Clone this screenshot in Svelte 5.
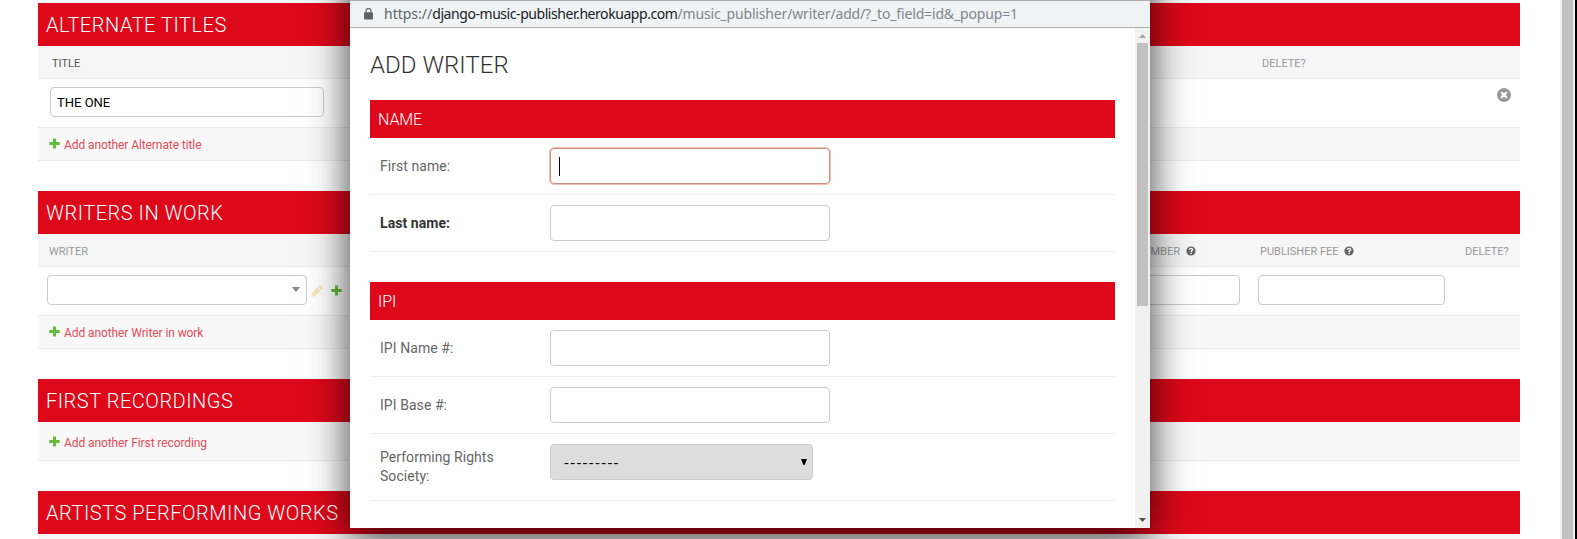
<script>
  const personal = [
    { label: 'First name:', focused: true },
    { label: 'Last name:', required: true }
  ];
  const ipi = [{ label: 'IPI Name #:' }, { label: 'IPI Base #:' }];
</script>

{#snippet plus()}
  <svg class="plus" width="11" height="11" viewBox="0 0 11 11"><path d="M4 0.4h3v3.6h3.7v3H7v3.6H4V7H.3V4H4z" fill="#67bb3c" /></svg>
{/snippet}

{#snippet help()}
  <svg class="help" width="10" height="10" viewBox="0 0 10 10">
    <circle cx="5" cy="5" r="4.6" fill="#666" />
    <path d="M3.4 3.8C3.5 1.9 6.7 1.9 6.6 3.7C6.5 4.7 5.1 4.6 5.1 5.9" fill="none" stroke="#fff" stroke-width="1.3" />
    <rect x="4.4" y="6.7" width="1.4" height="1.3" fill="#fff" />
  </svg>
{/snippet}

{#snippet field(f)}
  <div class="field">
    <label class:required={f.required} for={f.label}>{f.label}</label>
    <div id={f.label} class="box" class:focused={f.focused}>
      {#if f.focused}<span class="caret"></span>{/if}
    </div>
  </div>
{/snippet}

<div class="screen">
  <main>
    <div class="top"></div>
    <section>
      <h2>ALTERNATE TITLES</h2>
      <div class="head titles"><span class="dark">TITLE</span><span>DELETE?</span></div>
      <div class="row titles-row">
        <div class="input title-input"><span>THE ONE</span></div>
        <svg class="remove" width="14" height="14" viewBox="0 0 14 14">
          <circle cx="7" cy="7" r="7" fill="#999" />
          <path d="M4.2 4.2l5.6 5.6M9.8 4.2L4.2 9.8" stroke="#fff" stroke-width="2.3" />
        </svg>
      </div>
      <div class="add">{@render plus()}<span>Add another Alternate title</span></div>
    </section>

    <section>
      <h2>WRITERS IN WORK</h2>
      <div class="head writers">
        <span>WRITER</span>
        <span class="number">SAAN NUMBER {@render help()}</span>
        <span>PUBLISHER FEE {@render help()}</span>
        <span>DELETE?</span>
      </div>
      <div class="row writers-row">
        <div class="input combo"><svg width="8" height="5" viewBox="0 0 8 5"><path d="M0 0h8L4 5z" fill="#888" /></svg></div>
        <svg class="pencil" width="12" height="12" viewBox="0 0 12 12">
          <path d="M.3 11.7L.8 7.9 6.2 2.5 9.5 5.8 4.1 11.2zM6.9 1.8L8.3.5Q9.2-.2 10 .6L11.4 2Q12.2 2.8 11.5 3.7L10.2 5.1z" fill="#f7e4bf" />
          <path d="M1.8 9.1l1.1 1.1" stroke="#fff" />
        </svg>
        {@render plus()}
        <div class="input saan"></div>
        <div class="input fee"></div>
      </div>
      <div class="add">{@render plus()}<span>Add another Writer in work</span></div>
    </section>

    <section>
      <h2>FIRST RECORDINGS</h2>
      <div class="add tall">{@render plus()}<span>Add another First recording</span></div>
    </section>

    <section>
      <h2>ARTISTS PERFORMING WORKS</h2>
      <div class="head"></div>
    </section>
  </main>
  <div class="pagebar"><div></div></div>

  <div class="popup">
    <div class="address">
      <svg width="9" height="12" viewBox="0 0 9 12">
        <rect x="0" y="4.2" width="9" height="7.3" rx="1" fill="#5f6368" />
        <path d="M2 5V3a2.5 2.5 0 0 1 5 0v2" fill="none" stroke="#5f6368" stroke-width="1.2" />
      </svg>
      <span class="url"><span class="scheme">https://</span><span class="host">django-music-publisher.herokuapp.com</span><span class="path">/music_publisher/writer/add/?_to_field=id&amp;_popup=1</span></span>
    </div>
    <div class="view">
      <div class="content">
        <h1>ADD WRITER</h1>
        <fieldset>
          <h3>NAME</h3>
          {#each personal as f}{@render field(f)}{/each}
        </fieldset>
        <fieldset>
          <h3>IPI</h3>
          {#each ipi as f}{@render field(f)}{/each}
          <div class="field society">
            <label for="society">Performing Rights Society:</label>
            <div id="society" class="box select">
              <span>---------</span>
              <svg width="6" height="6" viewBox="0 0 6 6"><path d="M0 0h6L3.6 6H2.4z" fill="#000" /></svg>
            </div>
          </div>
        </fieldset>
      </div>
      <div class="bar">
        <svg width="7" height="4" viewBox="0 0 7 4"><path d="M0 4h7L3.5 0z" fill="#a3a3a3" /></svg>
        <div class="thumb"></div>
        <svg width="7" height="4" viewBox="0 0 7 4"><path d="M0 0h7L3.5 4z" fill="#505050" /></svg>
      </div>
    </div>
  </div>
</div>

<style>
  * { box-sizing: border-box; }
  .screen {
    position: relative;
    width: 1577px;
    height: 539px;
    overflow: hidden;
    display: flex;
    background: #fff;
    font-family: Roboto, 'Liberation Sans', sans-serif;
    white-space: nowrap;
  }
  main { width: 1560px; padding: 0 40px 0 38px; flex: none; }
  .top { height: 3px; background: #f8f8f8; }
  section { margin-bottom: 30px; }
  h1, h2, h3 { margin: 0; font-weight: 300; }
  h2 {
    height: 43px;
    padding-left: 8px;
    background: #dd081a;
    color: #fff;
    font-size: 20px;
    line-height: 44px;
    letter-spacing: 0.52px;
  }
  .head {
    height: 33px;
    display: grid;
    align-items: center;
    background: #f6f6f6;
    border-bottom: 1px solid #eaeaea;
    color: #999;
    font-size: 11px;
    line-height: 31px;
    padding-top: 1px;
  }
  .head span { height: 29px; }
  .dark { color: #555; }
  .titles { grid-template-columns: 1210px auto; padding-left: 14px; }
  .writers { grid-template-columns: 1035px 176px 205px auto; padding-left: 11px; }
  .number { padding-left: 20px; }
  .help { margin-left: 3px; vertical-align: -1px; }
  .row {
    height: 49px;
    display: flex;
    padding: 8px 9px 0;
    border-bottom: 1px solid #eaeaea;
  }
  .input { height: 30px; border: 1px solid #ccc; border-radius: 4px; background: #fff; }
  .titles-row { justify-content: space-between; padding-left: 12px; }
  .title-input { width: 274px; padding-left: 6px; font-size: 13px; line-height: 29px; color: #000; font-weight: 400; }
  .remove { margin-top: 1px; }
  .combo { width: 260px; display: flex; justify-content: flex-end; padding: 11px 6px 0 0; }
  .pencil { margin: 10px 8px 0 4px; }
  .writers-row .plus { margin: 10px 0 0; }
  .saan { width: 186px; margin-left: 712px; }
  .fee { width: 187px; margin-left: 18px; }
  .add {
    height: 33px;
    display: flex;
    align-items: center;
    gap: 4px;
    padding-left: 11px;
    background: #f8f8f8;
    border-bottom: 1px solid #eaeaea;
    color: #e54b58;
    font-size: 12px;
    letter-spacing: -0.09px;
  }
  .add .plus { margin-top: -1px; }
  .add span { padding-top: 1px; }
  .tall { height: 39px; padding-top: 2px; }
  .pagebar { width: 17px; flex: none; padding: 0 2px; background: #f1f1f1; border-right: 2px solid #000; }
  .pagebar div { height: 539px; width: 11px; background: #c1c1c1; }

  .popup { position: absolute; left: 350px; top: 0; width: 800px; height: 528px; }
  .popup::before {
    content: '';
    position: absolute;
    inset: -60px 0 0;
    box-shadow: 0 10px 38px rgba(0, 0, 0, 0.77);
  }
  .address {
    position: relative;
    height: 28px;
    display: flex;
    align-items: center;
    gap: 11px;
    padding-left: 14px;
    background: #eff3f4;
    border-top: 1px solid #adadad;
    border-bottom: 1px solid #adadad;
  }
  .url { font: 14px/26px 'Noto Sans', 'Open Sans', sans-serif; }
  .scheme { color: #5f6368; }
  .host { color: #202124; letter-spacing: -0.44px; }
  .path { color: #80868b; letter-spacing: -0.16px; }
  .view { position: relative; display: flex; height: 500px; background: #fff; }
  .content { width: 785px; padding: 0 20px; }
  h1 { height: 72px; padding-top: 23px; color: #333; font-size: 24px; line-height: 29px; letter-spacing: 0.05px; }
  fieldset { border: 0; margin: 0 0 30px; padding: 0; min-width: 0; }
  h3 { height: 38px; padding-left: 8px; background: #dd081a; color: #fff; font-size: 16px; line-height: 40px; letter-spacing: -0.1px; }
  .field { height: 57px; display: flex; padding: 10px; border-bottom: 1px solid #eee; }
  .field label { width: 170px; flex: none; color: #666; font-size: 14px; line-height: 36px; white-space: normal; letter-spacing: 0.06px; }
  .field .required { color: #333; font-weight: 700; }
  .box { width: 280px; height: 36px; border: 1px solid #ccc; border-radius: 4px; display: flex; }
  .focused { border-color: #c98c7e; box-shadow: 0 0 0 1px #f5c0b4; padding: 8px 0 0 8px; }
  .caret { width: 1px; height: 19px; background: #000; }
  .society { height: 67px; }
  .society label { line-height: 19px; padding: 4px 45px 0 0; }
  .select {
    width: 263px;
    background: #ddd;
    justify-content: space-between;
    padding: 0 5px 0 13px;
    align-items: center;
    color: #000;
    font: 15px/30px 'Noto Sans', sans-serif;
    letter-spacing: 1.37px;
  }
  .bar {
    width: 15px;
    display: flex;
    flex-direction: column;
    align-items: center;
    padding: 6px 0;
    background: #f1f1f1;
  }
  .thumb { width: 11px; height: 263px; margin: 5px 0 auto; background: #c1c1c1; }
</style>
